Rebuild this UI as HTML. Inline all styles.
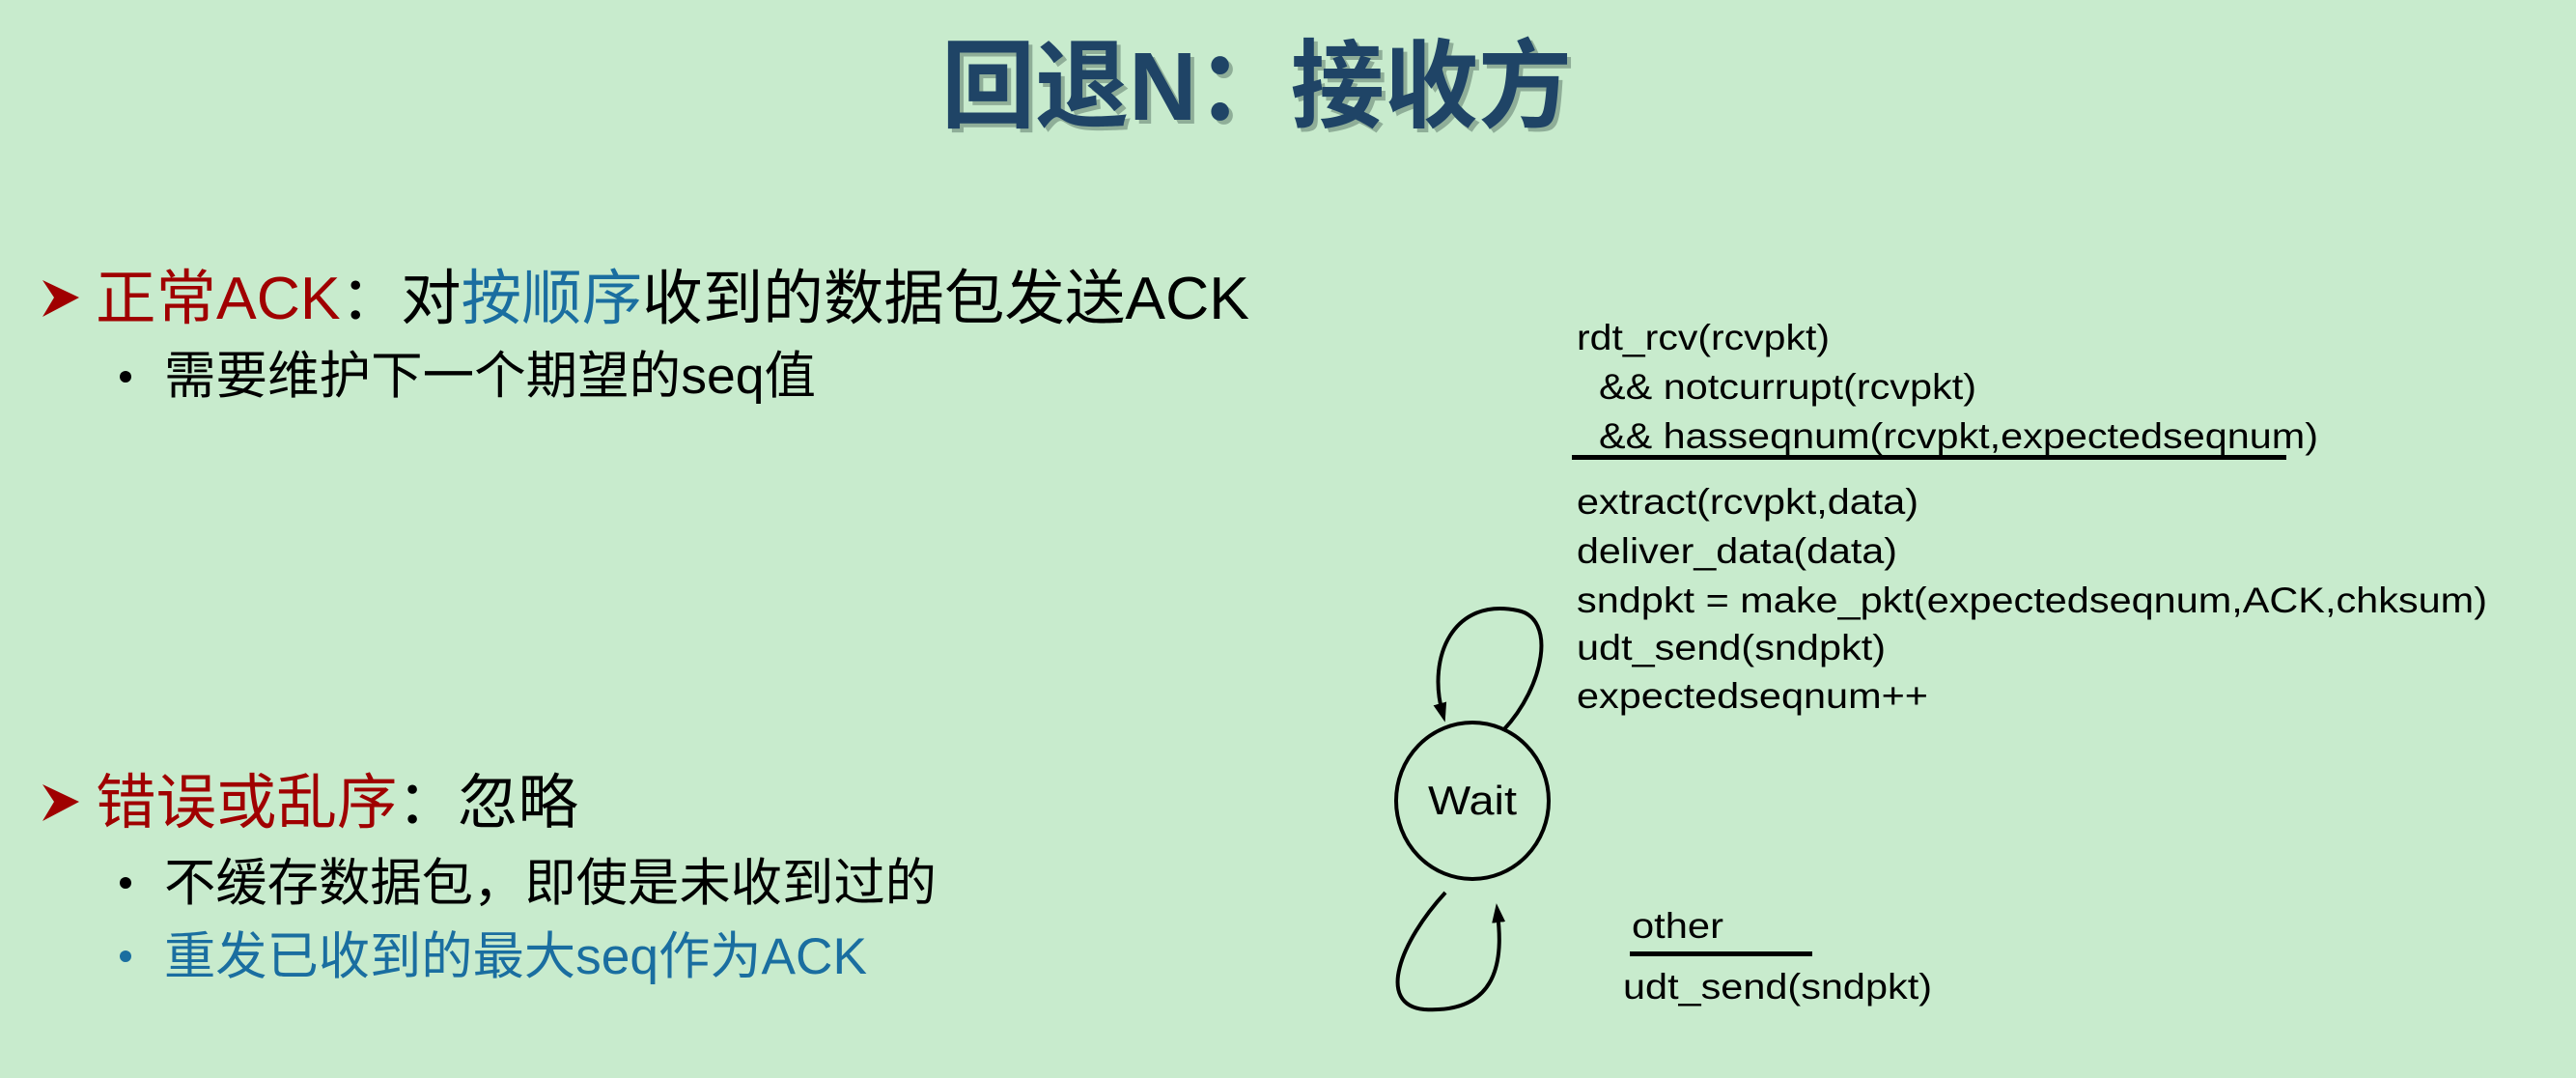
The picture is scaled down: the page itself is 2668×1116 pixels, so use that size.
<!DOCTYPE html>
<html><head><meta charset="utf-8"><style>
html,body{margin:0;padding:0;background:#c8ebcd;}
svg{display:block;}
text{font-family:"Liberation Sans","Noto Sans CJK SC",sans-serif;}
</style></head><body>
<svg width="2668" height="1116" viewBox="0 0 2668 1116" xmlns="http://www.w3.org/2000/svg">
<defs><marker id="ah" markerWidth="20" markerHeight="16" refX="10" refY="8" orient="auto" markerUnits="userSpaceOnUse"><path d="M0,1 L20,8 L0,15 Z" fill="#000"/></marker></defs>
<rect width="2668" height="1116" fill="#c8ebcd"/>
<text x="979" y="128" font-size="100" font-weight="bold" fill="#8fae98" textLength="653" lengthAdjust="spacingAndGlyphs">回退N：接收方</text>
<text x="975" y="124" font-size="100" font-weight="bold" fill="#1f4466" textLength="653" lengthAdjust="spacingAndGlyphs">回退N：接收方</text>

<g>
<polygon points="44,290 82,308 44,328 56,308" fill="#a00000"/>
<text x="99" y="330" font-size="62" textLength="1195" lengthAdjust="spacingAndGlyphs"><tspan fill="#a00000">正常ACK</tspan><tspan fill="#000">：对</tspan><tspan fill="#1a6ea0">按顺序</tspan><tspan fill="#000">收到的数据包发送ACK</tspan></text>
<circle cx="130" cy="390" r="6" fill="#000"/>
<text x="170" y="407" font-size="53" fill="#000" textLength="675" lengthAdjust="spacingAndGlyphs">需要维护下一个期望的seq值</text>

<polygon points="44,812 82,830 44,850 56,830" fill="#a00000"/>
<text x="99" y="852" font-size="62" textLength="500" lengthAdjust="spacingAndGlyphs"><tspan fill="#a00000">错误或乱序</tspan><tspan fill="#000">：忽略</tspan></text>
<circle cx="130" cy="914" r="6" fill="#000"/>
<text x="170" y="932" font-size="53" fill="#000" textLength="800" lengthAdjust="spacingAndGlyphs">不缓存数据包，即使是未收到过的</text>
<circle cx="130" cy="990" r="6" fill="#1a6ea0"/>
<text x="170" y="1008" font-size="53" fill="#1a6ea0" textLength="728" lengthAdjust="spacingAndGlyphs">重发已收到的最大seq作为ACK</text>
</g>

<g font-size="37" fill="#000">
<text x="1633" y="362" textLength="262" lengthAdjust="spacingAndGlyphs">rdt_rcv(rcvpkt)</text>
<text x="1656" y="413" textLength="391" lengthAdjust="spacingAndGlyphs">&amp;&amp; notcurrupt(rcvpkt)</text>
<text x="1656" y="464" textLength="745" lengthAdjust="spacingAndGlyphs">&amp;&amp; hasseqnum(rcvpkt,expectedseqnum)</text>
<rect x="1628" y="471" width="740" height="5" fill="#000"/>
<text x="1633" y="532" textLength="354" lengthAdjust="spacingAndGlyphs">extract(rcvpkt,data)</text>
<text x="1633" y="583" textLength="332" lengthAdjust="spacingAndGlyphs">deliver_data(data)</text>
<text x="1633" y="634" textLength="943" lengthAdjust="spacingAndGlyphs">sndpkt = make_pkt(expectedseqnum,ACK,chksum)</text>
<text x="1633" y="683" textLength="320" lengthAdjust="spacingAndGlyphs">udt_send(sndpkt)</text>
<text x="1633" y="733" textLength="364" lengthAdjust="spacingAndGlyphs">expectedseqnum++</text>
<text x="1690" y="971" textLength="95" lengthAdjust="spacingAndGlyphs">other</text>
<rect x="1688" y="985" width="189" height="5" fill="#000"/>
<text x="1681" y="1034" textLength="320" lengthAdjust="spacingAndGlyphs">udt_send(sndpkt)</text>
</g>

<ellipse cx="1525" cy="829" rx="79" ry="81" fill="none" stroke="#000" stroke-width="4"/>
<text x="1525" y="843" font-size="42" text-anchor="middle" textLength="92" lengthAdjust="spacingAndGlyphs">Wait</text>
<path d="M1557,756 C1600,710 1612,640 1572,632 C1505,618 1478,680 1494,738" fill="none" stroke="#000" stroke-width="4" marker-end="url(#ah)"/>
<path d="M1497,924 C1450,975 1425,1040 1475,1045 C1560,1050 1555,980 1551,945" fill="none" stroke="#000" stroke-width="4" marker-end="url(#ah)"/>
</svg>
</body></html>
